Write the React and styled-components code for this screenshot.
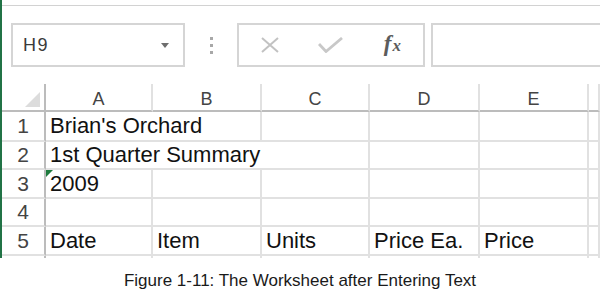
import React from 'react';
import styled, { createGlobalStyle } from 'styled-components';

const Global = createGlobalStyle`
  html, body { margin: 0; padding: 0; background: #ffffff; }
  body {
    width: 600px;
    height: 298px;
    overflow: hidden;
    font-family: "Liberation Sans", Arial, sans-serif;
  }
`;

const Page = styled.div`
  display: flex;
  flex-direction: column;
  width: 600px;
  height: 298px;
`;

const Window = styled.div`
  flex: none;
  height: 258px;
  box-sizing: border-box;
  border-left: 2px solid #217346;
  display: flex;
  flex-direction: column;
  overflow: hidden;
`;

const RibbonEdge = styled.div`
  flex: none;
  height: 5px;
  border-bottom: 1px solid #d2d2d2;
`;

const FormulaBar = styled.div`
  flex: none;
  display: flex;
  align-items: center;
  height: 44px;
  margin-top: 17px;
  padding-left: 9px;
`;

const NameBox = styled.div`
  flex: none;
  width: 174px;
  height: 44px;
  box-sizing: border-box;
  border: 2px solid #d5d5d5;
  display: flex;
  align-items: center;
  justify-content: space-between;
  padding: 0 14px 0 10px;
  font-size: 18px;
  letter-spacing: 1.5px;
  color: #3a3a3a;
`;

const DropArrow = styled.span`
  width: 0;
  height: 0;
  border-left: 4px solid transparent;
  border-right: 4px solid transparent;
  border-top: 5px solid #6e6e6e;
`;

const Grip = styled.div`
  flex: none;
  width: 52px;
  display: flex;
  flex-direction: column;
  align-items: center;
  gap: 4px;
`;

const GripDot = styled.span`
  width: 3px;
  height: 3px;
  background: #a8a8a8;
`;

const ButtonGroup = styled.div`
  flex: none;
  width: 188px;
  height: 44px;
  box-sizing: border-box;
  border: 2px solid #d5d5d5;
  display: flex;
  align-items: center;
`;

const BarButton = styled.div`
  flex: 1;
  display: flex;
  align-items: center;
  justify-content: center;
  height: 100%;
`;

const FxLabel = styled.span`
  font-family: "Liberation Serif", "Times New Roman", serif;
  font-style: italic;
  font-weight: bold;
  color: #5c5c5c;
  font-size: 23px;
  line-height: 1;
  margin-top: -3px;
  & > small {
    font-size: 17px;
    margin-left: 1px;
  }
`;

const FormulaInput = styled.div`
  flex: 1;
  height: 44px;
  margin-left: 6px;
  box-sizing: border-box;
  border: 2px solid #d5d5d5;
  border-right: none;
`;

const Sheet = styled.div`
  flex: none;
  margin-top: 17px;
  display: grid;
  grid-template-columns: 44px 107px 109px 108px 110px 109px 1fr;
  grid-template-rows: 28px 30px 28px 29px 28px 29px 10px;
`;

const Corner = styled.div`
  box-sizing: border-box;
  border-right: 2px solid #bcbcbc;
  border-bottom: 2px solid #bcbcbc;
  display: flex;
  align-items: flex-end;
  justify-content: flex-end;
  padding: 0 4px 3px 0;
`;

const CornerMark = styled.span`
  width: 0;
  height: 0;
  border-left: 15px solid transparent;
  border-bottom: 15px solid #dcdcdc;
`;

const ColHeader = styled.div`
  box-sizing: border-box;
  border-right: 2px solid #e1e1e1;
  border-bottom: 2px solid #bcbcbc;
  display: flex;
  align-items: center;
  justify-content: center;
  padding-top: 5px;
  font-size: 18px;
  color: #444444;
`;

const RowHeader = styled.div`
  box-sizing: border-box;
  border-right: 2px solid #bcbcbc;
  border-bottom: 2px solid #e1e1e1;
  display: flex;
  align-items: center;
  justify-content: center;
  font-size: 21px;
  color: #444444;
`;

const Cell = styled.div`
  position: relative;
  box-sizing: border-box;
  grid-column: span ${(p) => p.$span || 1};
  border-right: 2px solid #e1e1e1;
  border-bottom: 2px solid #e1e1e1;
  display: flex;
  align-items: center;
  padding-left: 4px;
  white-space: nowrap;
  font-size: 22px;
  color: #111111;
  ${(p) =>
    p.$flag &&
    `
    &::before {
      content: "";
      position: absolute;
      left: 0;
      top: 0;
      width: 0;
      height: 0;
      border-top: 7px solid #1e7b3e;
      border-right: 7px solid transparent;
    }
  `}
`;

const Caption = styled.div`
  flex: 1;
  padding-top: 13px;
  text-align: center;
  font-size: 17px;
  color: #1a1a1a;
`;

const CloseIcon = () => (
  <svg width="20" height="16" viewBox="0 0 20 16">
    <path d="M2 1 L18 15 M18 1 L2 15" stroke="#c2c2c2" strokeWidth="2" fill="none" />
  </svg>
);

const CheckIcon = () => (
  <svg width="25" height="16" viewBox="0 0 25 16">
    <path d="M1 7 L8 14.5 L24 1" stroke="#c8c8c8" strokeWidth="2.8" fill="none" />
  </svg>
);

const columns = ['A', 'B', 'C', 'D', 'E', ''];

const rows = [
  { n: '1', cells: [{ t: "Brian's Orchard", span: 2 }, {}, {}, {}, {}] },
  { n: '2', cells: [{ t: '1st Quarter Summary', span: 3 }, {}, {}, {}] },
  { n: '3', cells: [{ t: '2009', flag: true }, {}, {}, {}, {}, {}] },
  { n: '4', cells: [{}, {}, {}, {}, {}, {}] },
  { n: '5', cells: [{ t: 'Date' }, { t: 'Item' }, { t: 'Units' }, { t: 'Price Ea.' }, { t: 'Price' }, {}] },
  { n: '', cells: [{}, {}, {}, {}, {}, {}] },
];

export default function App() {
  return (
    <Page>
      <Global />
      <Window>
        <RibbonEdge />
        <FormulaBar>
          <NameBox>
            <span>H9</span>
            <DropArrow />
          </NameBox>
          <Grip>
            <GripDot />
            <GripDot />
            <GripDot />
          </Grip>
          <ButtonGroup>
            <BarButton><CloseIcon /></BarButton>
            <BarButton><CheckIcon /></BarButton>
            <BarButton><FxLabel>f<small>x</small></FxLabel></BarButton>
          </ButtonGroup>
          <FormulaInput />
        </FormulaBar>
        <Sheet>
          <Corner><CornerMark /></Corner>
          {columns.map((c, i) => (
            <ColHeader key={i}>{c}</ColHeader>
          ))}
          {rows.map((r, ri) => (
            <React.Fragment key={ri}>
              <RowHeader>{r.n}</RowHeader>
              {r.cells.map((c, ci) => (
                <Cell key={ci} $span={c.span} $flag={c.flag}>{c.t}</Cell>
              ))}
            </React.Fragment>
          ))}
        </Sheet>
      </Window>
      <Caption>Figure 1-11: The Worksheet after Entering Text</Caption>
    </Page>
  );
}
